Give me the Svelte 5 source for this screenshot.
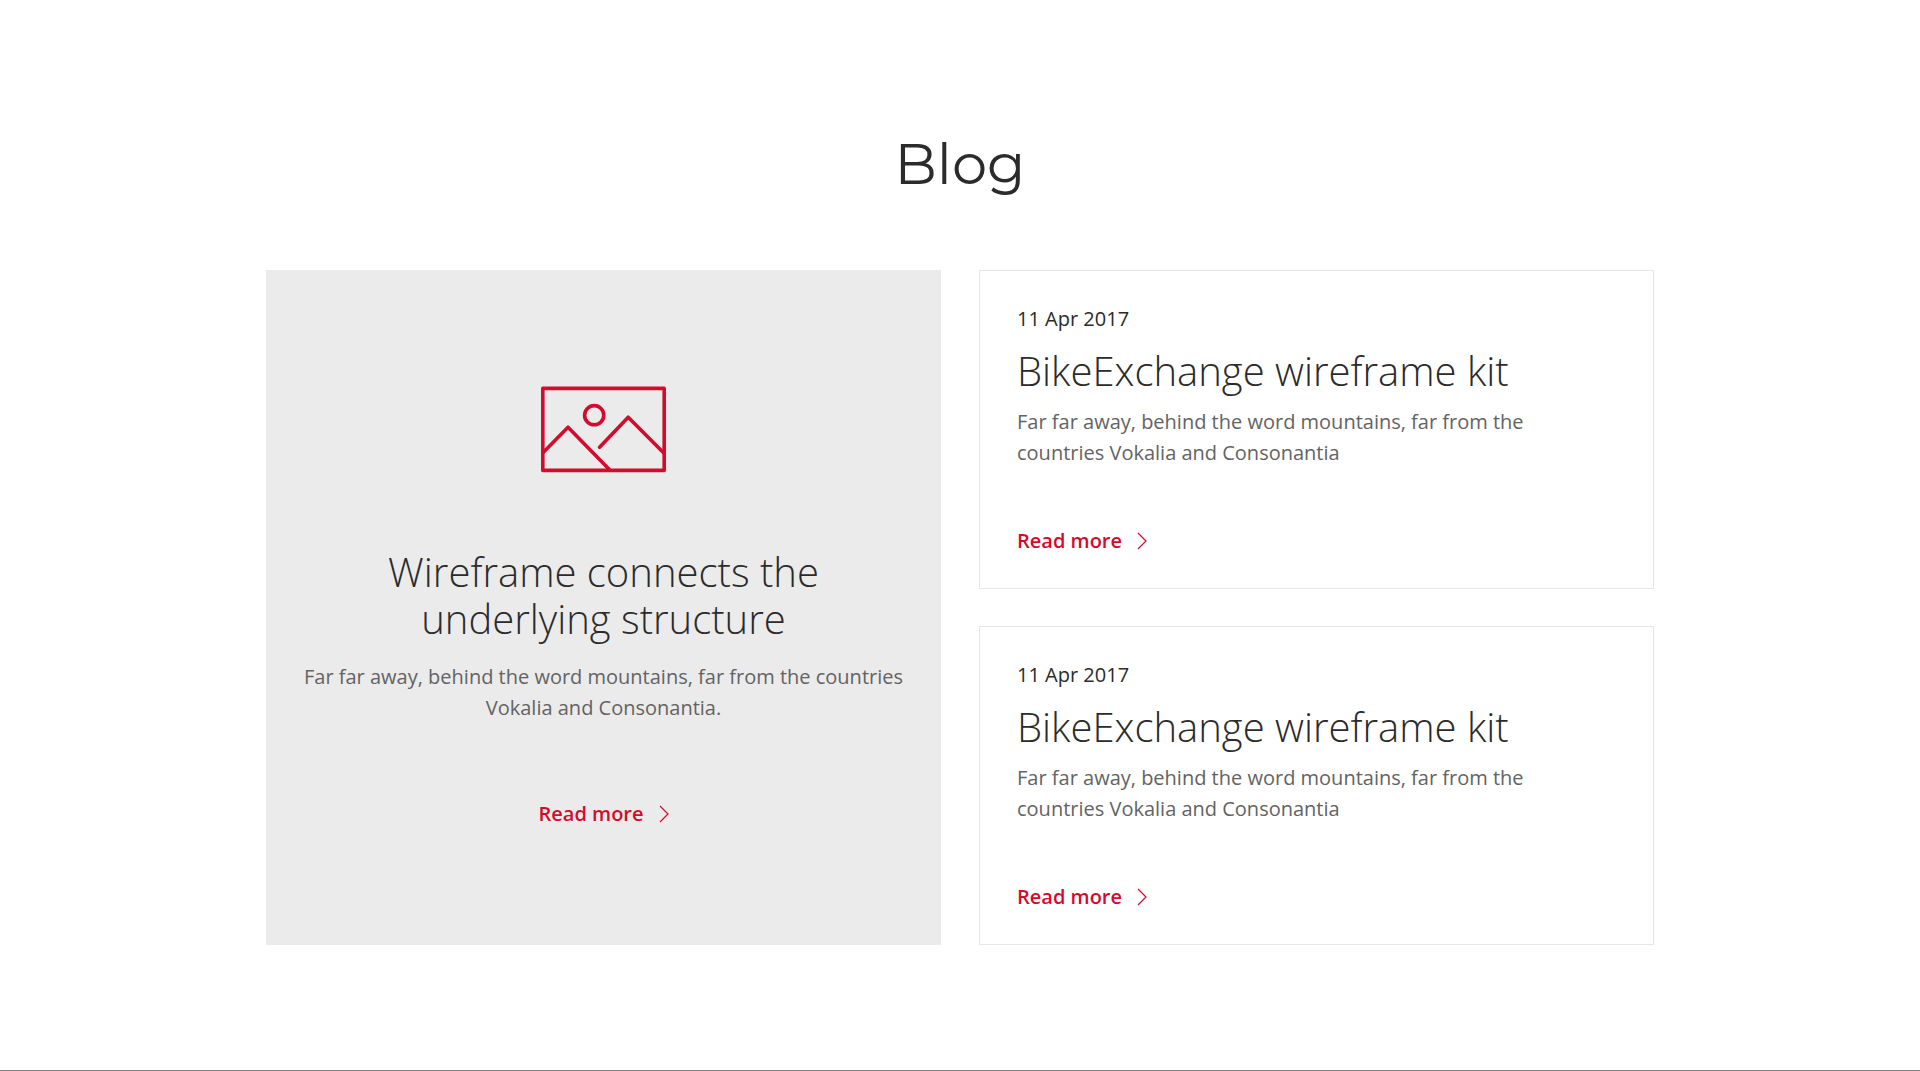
<script>
    const featured = {
        title: 'Wireframe connects the underlying structure',
        text: 'Far far away, behind the word mountains, far from the countries Vokalia and Consonantia.'
    }

    const posts = [
        {
            id: 1,
            date: '11 Apr 2017',
            title: 'BikeExchange wireframe kit',
            text: 'Far far away, behind the word mountains, far from the countries Vokalia and Consonantia'
        },
        {
            id: 2,
            date: '11 Apr 2017',
            title: 'BikeExchange wireframe kit',
            text: 'Far far away, behind the word mountains, far from the countries Vokalia and Consonantia'
        }
    ]
</script>

{#snippet readMore()}
    <a class="read-more" href="#blog">
        Read more
        <svg width="10" height="18" viewBox="0 0 10 18" aria-hidden="true">
            <path d="M1 1l8 8-8 8" fill="none" stroke="currentColor" stroke-width="1.2" />
        </svg>
    </a>
{/snippet}

<section class="blog" id="blog">
    <h1>Blog</h1>

    <div class="grid">
        <article class="featured">
            <svg class="picture" width="125" height="87" viewBox="0 0 125 87" aria-hidden="true">
                <g fill="none" stroke="currentColor" stroke-width="3.6" stroke-linecap="round" stroke-linejoin="round">
                    <rect x="1.8" y="2.4" width="121.4" height="82" />
                    <circle cx="53.2" cy="29.2" r="9.6" />
                    <path d="M2.2 66.4L27 41.2 68.6 83.8" />
                    <path d="M58.6 61.2L87.2 31.2 122.8 67" />
                </g>
            </svg>
            <h2>{featured.title}</h2>
            <p>{featured.text}</p>
            {@render readMore()}
        </article>

        <div class="posts">
            {#each posts as post (post.id)}
                <article class="post">
                    <time datetime="2017-04-11">{post.date}</time>
                    <h2>{post.title}</h2>
                    <p>{post.text}</p>
                    {@render readMore()}
                </article>
            {/each}
        </div>
    </div>
</section>

<style>
    :global(body) {
        margin: 0;
        background: #fff;
    }
    .blog {
        box-sizing: border-box;
        padding: 127px 32px 125px;
        border-bottom: 1px solid #808080;
        color: #2b2b2b;
        font-family: "Open Sans", sans-serif;
        font-size: 20px;
        line-height: 31px;
    }
    h1 {
        margin: 0 0 69px;
        font-family: Montserrat, Inter, sans-serif;
        font-size: 56px;
        font-weight: 400;
        line-height: 74px;
        text-align: center;
    }
    h2 {
        margin: 0;
        font-size: 40px;
        font-weight: 300;
        line-height: 47px;
    }
    p {
        margin: 0;
        color: #636363;
    }
    .grid {
        display: grid;
        grid-template-columns: 1fr 1fr;
        gap: 38px;
        max-width: 1388px;
        margin: 0 auto;
    }
    .featured {
        display: flex;
        flex-direction: column;
        align-items: center;
        justify-content: center;
        padding: 32px;
        background: #ebebeb;
        text-align: center;
    }
    .featured h2 {
        max-width: 520px;
        margin: 75px 0 19px;
    }
    .featured p {
        margin-bottom: 75px;
    }
    .picture {
        color: #d30b2c;
    }
    .posts {
        display: flex;
        flex-direction: column;
        gap: 37px;
    }
    .post {
        display: flex;
        flex: 1;
        flex-direction: column;
        align-items: flex-start;
        padding: 32px 37px;
        border: 1px solid #e6e6e6;
    }
    .post h2 {
        margin: 13px 0 12px;
    }
    .post p {
        max-width: 560px;
        margin-bottom: 57px;
    }
    .read-more {
        display: inline-flex;
        align-items: center;
        gap: 15px;
        color: #d30b2c;
        font-weight: 600;
        text-decoration: none;
    }
</style>
